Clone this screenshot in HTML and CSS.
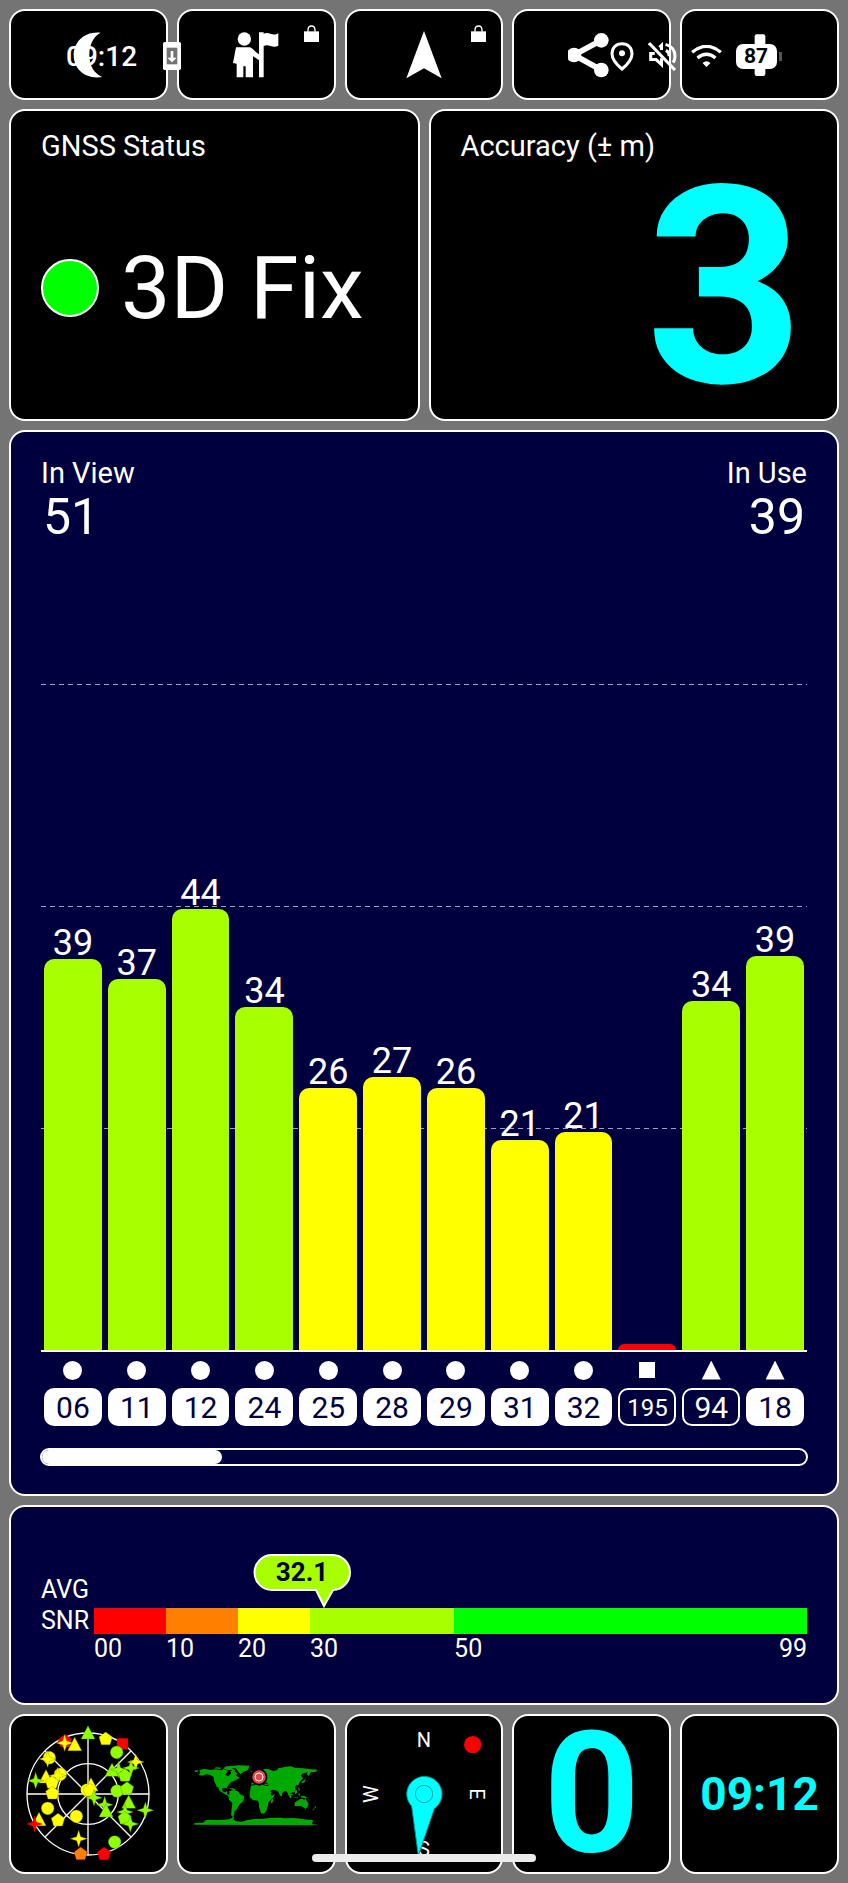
FILE: index.html
```html
<!DOCTYPE html>
<html lang="en">
<head>
    <meta charset="UTF-8">
    <meta name="viewport" content="width=device-width, initial-scale=1.0">
    <title>GNSS Status</title>
    <link rel="stylesheet" href="styles.css">
</head>
<body>
    <div class="status-bar">
        <span class="status-clock">09:12</span>
        <svg class="status-download" width="18" height="28" viewBox="0 0 54 84">
            <rect width="54" height="84" rx="5" fill="#fff"/>
            <rect x="11" y="17" width="32" height="50" fill="#747474"/>
            <path d="M23 27h8v20h10L27 61 13 47h10z" fill="#fff"/>
        </svg>
        <div class="status-icons">
            <svg width="24" height="29" viewBox="0 0 72 87">
                <path d="M36 5C18 5 6 18 6 35c0 20 18 36 30 46 12-10 30-26 30-46C66 18 54 5 36 5z" fill="none" stroke="#fff" stroke-width="9"/>
                <circle cx="36" cy="34" r="9" fill="#fff"/>
            </svg>
            <svg width="29" height="29" viewBox="0 0 86 86" fill="none" stroke="#fff" stroke-width="9">
                <path d="M3 3L80 83"/>
                <path d="M20 34H8v18h16l16 15V48M34 16l6-6v14" />
                <path d="M52 7c17 5 28 18 28 35 0 7-2 13-5 19M53 25c7 4 10 10 10 17"/>
            </svg>
            <svg width="31" height="22" viewBox="0 0 92 66" fill="none" stroke="#fff" stroke-width="10">
                <path d="M3 22Q46-14 89 22"/>
                <path d="M19 39Q46 17 73 39"/>
                <path d="M34 54q12-10 24 0L46 66z" fill="#fff" stroke="none"/>
            </svg>
            <span class="battery">87</span>
        </div>
    </div>

    <main class="dashboard">
        <nav class="toolbar">
            <button class="tile" aria-label="Night mode">
                <svg class="icon" viewBox="193 92 144 144">
                    <path d="M303 97C252 92 222 127 222 165c0 40 34 74 86 65-27-11-39-37-39-66 0-31 12-56 34-67z"/>
                </svg>
            </button>
            <button class="tile" aria-label="Tour guide">
                <svg class="icon" viewBox="697 92 144 144">
                    <circle cx="734" cy="116" r="20"/>
                    <path d="M709 141h42c8 3 14 12 27 21V96h14v4c16-8 26 10 44-1v37c-18 10-28-8-44 1v94h-14v-52c-8-4-13-8-18-12v64h-22v-33h-7v33h-20v-41l-11-2z"/>
                </svg>
                <svg class="lock" viewBox="0 0 45 51">
                    <path d="M0 19h45v32H0z"/>
                    <path d="M12 20v-5c0-16 21-16 21 0v5" fill="none" stroke="#fff" stroke-width="4"/>
                </svg>
            </button>
            <button class="tile" aria-label="Navigate">
                <svg class="icon" viewBox="1200 92 144 144">
                    <path d="M1272 92l-53 142 53-30 53 30z"/>
                </svg>
                <svg class="lock" viewBox="0 0 45 51">
                    <path d="M0 19h45v32H0z"/>
                    <path d="M12 20v-5c0-16 21-16 21 0v5" fill="none" stroke="#fff" stroke-width="4"/>
                </svg>
            </button>
            <button class="tile" aria-label="Share">
                <svg class="icon" viewBox="445 92 144 144">
                    <path d="M545 120l-82 44 82 45" fill="none" stroke="#fff" stroke-width="17"/>
                    <circle cx="545" cy="120" r="22"/>
                    <circle cx="463" cy="164" r="22"/>
                    <circle cx="545" cy="209" r="22"/>
                </svg>
            </button>
            <button class="tile" aria-label="Add">
                <svg class="icon" viewBox="947 92 144 144">
                    <rect x="1003" y="102" width="32" height="125" rx="6"/>
                    <rect x="962" y="148" width="106" height="32" rx="6"/>
                </svg>
            </button>
        </nav>

        <div class="summary">
            <section class="panel reading">
                <h2 class="label">GNSS Status</h2>
                <div class="fix">
                    <span class="fix-light"></span>
                    <span class="fix-text">3D Fix</span>
                </div>
            </section>
            <section class="panel reading">
                <h2 class="label">Accuracy (± m)</h2>
                <div class="accuracy">3</div>
            </section>
        </div>

        <section class="panel signal">
            <div class="counts">
                <div>
                    <h2 class="label">In View</h2>
                    <div class="count">51</div>
                </div>
                <div class="in-use">
                    <h2 class="label">In Use</h2>
                    <div class="count">39</div>
                </div>
            </div>
            <div class="plot">
                <div class="gridlines"><i></i><i></i><i></i></div>
                <div class="column"><span>39</span><div class="bar good" style="height: 58.7%"></div></div>
                <div class="column"><span>37</span><div class="bar good" style="height: 55.7%"></div></div>
                <div class="column"><span>44</span><div class="bar good" style="height: 66.2%"></div></div>
                <div class="column"><span>34</span><div class="bar good" style="height: 51.5%"></div></div>
                <div class="column"><span>26</span><div class="bar fair" style="height: 39.3%"></div></div>
                <div class="column"><span>27</span><div class="bar fair" style="height: 41%"></div></div>
                <div class="column"><span>26</span><div class="bar fair" style="height: 39.3%"></div></div>
                <div class="column"><span>21</span><div class="bar fair" style="height: 31.6%"></div></div>
                <div class="column"><span>21</span><div class="bar fair" style="height: 32.7%"></div></div>
                <div class="column"><div class="bar bad" style="height: 0.9%"></div></div>
                <div class="column"><span>34</span><div class="bar good" style="height: 52.4%"></div></div>
                <div class="column"><span>39</span><div class="bar good" style="height: 59.2%"></div></div>
            </div>
            <div class="satellites">
                <div class="satellite"><i class="shape circle"></i><span class="prn used">06</span></div>
                <div class="satellite"><i class="shape circle"></i><span class="prn used">11</span></div>
                <div class="satellite"><i class="shape circle"></i><span class="prn used">12</span></div>
                <div class="satellite"><i class="shape circle"></i><span class="prn used">24</span></div>
                <div class="satellite"><i class="shape circle"></i><span class="prn used">25</span></div>
                <div class="satellite"><i class="shape circle"></i><span class="prn used">28</span></div>
                <div class="satellite"><i class="shape circle"></i><span class="prn used">29</span></div>
                <div class="satellite"><i class="shape circle"></i><span class="prn used">31</span></div>
                <div class="satellite"><i class="shape circle"></i><span class="prn used">32</span></div>
                <div class="satellite"><i class="shape square"></i><span class="prn small">195</span></div>
                <div class="satellite"><i class="shape triangle"></i><span class="prn">94</span></div>
                <div class="satellite"><i class="shape triangle"></i><span class="prn used">18</span></div>
            </div>
            <div class="scroll-track"><div class="scroll-thumb" style="width: 23.6%"></div></div>
        </section>

        <section class="panel snr">
            <div class="snr-label">AVG<br>SNR</div>
            <div class="snr-scale">
                <div class="snr-bar">
                    <i class="bad"></i>
                    <i class="poor"></i>
                    <i class="fair"></i>
                    <i class="good"></i>
                    <i class="best"></i>
                    <div class="bubble" style="left: 32.4%">
                        <svg viewBox="0 0 98 54">
                            <path d="M19 1h60a17 17 0 0 1 1 35L71 52 63 36H19A17 17 0 0 1 19 1z" fill="#a8ff00" stroke="#fff" stroke-width="2"/>
                        </svg>
                        <span>32.1</span>
                    </div>
                </div>
                <div class="snr-ticks">
                    <span>00</span>
                    <span>10</span>
                    <span>20</span>
                    <span>30</span>
                    <span>50</span>
                    <span>99</span>
                </div>
            </div>
        </section>

        <nav class="gauges">
            <button class="tile" aria-label="Sky view">
                <svg class="gauge" viewBox="55 71 420 420">
                    <defs>
                        <path id="tri" d="M0-22L21 18H-21z"/>
                        <path id="pent" d="M0-20L20-5 13 18H-13L-20-5z"/>
                        <path id="star" d="M0-25L6-6 25 0 6 6 0 25-6 6-25 0-6-6z"/>
                        <circle id="dot" r="19"/>
                    </defs>
                    <g fill="none" stroke="#fff" stroke-width="4">
                        <circle cx="265" cy="281" r="183"/>
                        <circle cx="265" cy="281" r="91"/>
                        <path d="M265 98v366M82 281h366M136 152l258 258M394 152L136 410"/>
                    </g>
                    <g fill="#f00" stroke="#a00000" stroke-width="1">
                        <use href="#pent" x="196" y="122"/>
                        <path d="M352 114h33v33h-33z"/>
                        <use href="#pent" x="313" y="460"/>
                        <use href="#pent" x="243" y="460" fill="#ff8000"/>
                    </g>
                    <g fill="#ff0" stroke="#808000" stroke-width="1">
                        <use href="#star" x="195" y="128"/>
                        <use href="#tri" x="225" y="133"/>
                        <use href="#pent" x="318" y="115"/>
                        <use href="#dot" x="149" y="172"/>
                        <use href="#star" x="144" y="176"/>
                        <use href="#star" x="408" y="185"/>
                        <use href="#dot" x="182" y="222"/>
                        <use href="#tri" x="139" y="230"/>
                        <use href="#star" x="174" y="226"/>
                        <use href="#pent" x="157" y="246"/>
                        <use href="#pent" x="158" y="278"/>
                        <use href="#tri" x="274" y="254"/>
                        <use href="#dot" x="262" y="269"/>
                        <use href="#pent" x="271" y="269"/>
                        <use href="#dot" x="144" y="324"/>
                        <use href="#tri" x="118" y="358"/>
                        <use href="#pent" x="175" y="359"/>
                        <use href="#dot" x="230" y="348"/>
                        <use href="#star" x="237" y="415"/>
                    </g>
                    <use href="#star" x="105" y="371" fill="#f00"/>
                    <g fill="#90ff00" stroke="#408000" stroke-width="1">
                        <use href="#tri" x="265" y="98"/>
                        <use href="#dot" x="351" y="156"/>
                        <use href="#star" x="108" y="241"/>
                        <use href="#star" x="394" y="203"/>
                        <use href="#tri" x="337" y="210"/>
                        <use href="#star" x="357" y="208"/>
                        <use href="#pent" x="376" y="225"/>
                        <use href="#dot" x="352" y="272"/>
                        <use href="#pent" x="382" y="264"/>
                        <use href="#star" x="283" y="292"/>
                        <use href="#tri" x="387" y="306"/>
                        <use href="#star" x="315" y="313"/>
                        <use href="#tri" x="319" y="332"/>
                        <use href="#star" x="437" y="330"/>
                        <use href="#star" x="376" y="335"/>
                        <use href="#pent" x="375" y="353"/>
                        <use href="#star" x="392" y="371"/>
                        <use href="#dot" x="345" y="425"/>
                    </g>
                </svg>
            </button>
            <button class="tile" aria-label="Map">
                <svg class="gauge" viewBox="49 71 420 420">
                    <g fill="#00a800">
                        <path d="M74 211l10-2 2 4-8 3zM89 209l14-3 20 3 14-2 18 3 6-4 14 6-8 12 10 4 8-10-4-6 9-2 12 8-2 8 10 6-12 8-12 4-8 8-6 8 2 6-6-4-10 2 0 8 8 4 6-4 0 8 6 4 6 4-6 0-14-8-14-8-4-10-4-2-8-16-2-14-10-6-12-2-12 4-12-2 6-6z"/>
                        <path d="M132 204l8-3 16 1-6 4zM160 204l10-6 24-2 6 4-14 4 12 6-4 4-12-6-10 2zM176 198l30-3 34 1-6 14-12 4-10 8-8-10-6-8-18-2z"/>
                        <path d="M176 263l14 1 10 4-8 2zM179 272l14-3 14 5 4 8 13 6-4 16-10 8-8 14-8 8 0 8-4 8-6-6 2-20 2-16-10-10-2-10 3-8z"/>
                        <path d="M244 255l2-8 8-1 4-6 8-4 6-4 0-6-6 0 8-14 10-6 12 0 14 6 12-2 4-6 20-4 16-2 14 4 22 2 20 2 24 2-2 6-16 2-8 12-4-6 2-6-16 4-4 6 6 8-10 12-4 8-6 0-4 6 2 8-6 8-10 2 4 12-4 4-6-10-4-10-6-2-8 6-2 10-5-2-5-12-8-4-10-2-6 4 4 6-4 2 4 6 10-4-4 8-8 8-8 8-2 14-4 12-8 8-8-1-6-20 0-10-4-8-14-2-10-8 0-10z"/>
                        <path d="M305 298l4-3 2 6-4 8-4-2zM360 262l4 8-4 2zM361 275l10 10-6-1zM373 272l8-3 2 8-6 4zM385 282l6-3-1 8zM392 286l12 1 10 6-8 1-12-3zM370 290l16 2-6 2zM385 260l4 4 2 8-4-2zM394 245l10-5 4-8-2 12-8 5zM253 225l8 2-1 7-7 0zM240 212l8-1-3 4zM355 201l10 2-5 2z"/>
                        <path d="M376 306l10-6 6-5 7 0 4 5 4-6 4 8 6 8-4 12-8 2-6-4-8-4-12 2-5-2zM405 324l5 0-3 4zM436 317l4 3-6 6zM431 325l3 1-5 5z"/>
                        <path d="M74 373v-5l24-1 8-3-4-3 16-3 26 1 20-1 14-1 8-4 6-5 2 3-4 6 8 5 18 2 18-5 20-3 24 0 14-2 22-2 20 0 10 2 26-1 24 2 20 3 18 2-4 6 0 6 16 1v2z"/>
                    </g>
                    <path d="M243 254l8 0 8-4 10 5 10-4 8 4 10 0M280 250l10-2 4 2" fill="none" stroke="#000" stroke-width="3"/>
                    <circle cx="268" cy="230" r="25" fill="#000"/>
                    <circle cx="268" cy="230" r="20" fill="#e54848"/>
                    <circle cx="268" cy="230" r="12" fill="none" stroke="#fff" stroke-width="3"/>
                </svg>
            </button>
            <button class="tile" aria-label="Compass">
                <svg class="gauge compass" viewBox="72 71 420 420">
                    <text x="282" y="140">N</text>
                    <text x="282" y="466">S</text>
                    <text transform="translate(420 281) rotate(90)">E</text>
                    <text transform="translate(145 281) rotate(-90)">W</text>
                    <circle cx="428" cy="133" r="26" fill="#f00"/>
                    <path d="M245 318A53 53 0 1 1 313 325L265 466z" fill="#0ff" stroke="#009090" stroke-width="3"/>
                    <circle cx="282" cy="281" r="26" fill="none" stroke="#00a0a0" stroke-width="3"/>
                </svg>
            </button>
            <button class="tile speed">0</button>
            <button class="tile clock">09:12</button>
        </nav>
    </main>
    <div class="home-indicator"></div>
</body>
</html>
```
FILE: styles.css
```css
* {
    box-sizing: border-box;
}
body {
    position: relative;
    margin: 0;
    background-color: #747474;
    color: white;
    font-family: Roboto, "Liberation Sans", sans-serif;
}
svg {
    display: block;
}
.dashboard {
    display: flex;
    flex-direction: column;
    gap: 9px;
    min-height: 100vh;
    padding: 9px;
}
.toolbar,
.gauges {
    display: grid;
    grid-template-columns: repeat(5, 1fr);
    gap: 9px;
}
.toolbar {
    grid-auto-rows: 91px;
}
.gauges {
    grid-auto-rows: 160px;
}
.tile,
.panel {
    border: 2px solid white;
    border-radius: 16px;
    background-color: black;
    color: white;
}
.tile {
    position: relative;
    display: flex;
    align-items: center;
    justify-content: center;
    min-width: 0;
    padding: 0;
    font-family: inherit;
    cursor: pointer;
}
.icon {
    width: 48px;
    height: 48px;
    fill: white;
}
.lock {
    position: absolute;
    top: 14px;
    right: 15px;
    width: 15px;
    height: 17px;
    fill: white;
}

/* system status bar drawn over the toolbar */
.status-bar {
    position: absolute;
    top: 36px;
    left: 0;
    right: 0;
    z-index: 2;
    display: flex;
    align-items: center;
    height: 40px;
    padding: 0 66px;
    pointer-events: none;
}
.status-clock {
    font-size: 28px;
    font-weight: 500;
}
.status-download {
    margin-left: 26px;
}
.status-icons {
    display: flex;
    align-items: center;
    gap: 14px;
    margin-left: auto;
}
.battery {
    position: relative;
    width: 41px;
    height: 25px;
    margin-right: 5px;
    padding-left: 8px;
    border-radius: 7px;
    background-color: white;
    color: black;
    font-size: 21px;
    font-weight: 700;
    line-height: 25px;
}
.battery::after {
    content: "";
    position: absolute;
    top: 8px;
    right: -5px;
    width: 3px;
    height: 9px;
    background-color: #555;
}

.summary {
    display: grid;
    grid-template-columns: 1fr 1fr;
    gap: 9px;
}
.label {
    margin: 0;
    font-size: 29px;
    font-weight: 400;
    line-height: 34px;
}
.reading {
    display: flex;
    flex-direction: column;
    height: 312px;
    padding: 18px 30px 6px;
}
.fix,
.accuracy {
    display: flex;
    flex: 1;
    align-items: center;
}
.fix {
    gap: 22px;
}
.fix-light {
    width: 58px;
    height: 58px;
    border: 2px solid white;
    border-radius: 50%;
    background-color: #0f0;
}
.fix-text {
    font-size: 88px;
    line-height: 102px;
}
.accuracy {
    justify-content: flex-end;
    padding-right: 3px;
    color: #0ff;
    font-size: 276px;
    font-weight: 700;
    line-height: 240px;
}

.signal {
    display: flex;
    flex: 1;
    flex-direction: column;
    padding: 24px 30px 28px;
    background-color: #00003f;
}
.counts {
    display: flex;
    justify-content: space-between;
    margin-bottom: 140px;
}
.in-use {
    text-align: right;
}
.count {
    padding: 0 2px;
    font-size: 50px;
    line-height: 54px;
}
.plot,
.satellites {
    display: grid;
    grid-template-columns: repeat(12, 1fr);
}
.plot {
    position: relative;
    flex: 1;
    min-height: 320px;
    border-bottom: 2px solid white;
}
.gridlines {
    position: absolute;
    inset: 0;
    display: grid;
    grid-template-rows: repeat(3, 1fr);
}
.gridlines i {
    height: 1px;
    background: repeating-linear-gradient(90deg, #a0a0c4 0 5px, transparent 5px 9px);
}
.column {
    position: relative;
    display: flex;
    flex-direction: column;
    justify-content: flex-end;
    padding: 0 3px;
    text-align: center;
}
.column span {
    font-size: 36px;
    line-height: 32px;
}
.bar {
    border-radius: 10px 10px 0 0;
}
.good {
    background-color: #a8ff00;
}
.fair {
    background-color: #ff0;
}
.poor {
    background-color: #ff8000;
}
.bad {
    background-color: #f00;
}
.best {
    background-color: #0f0;
}
.satellite {
    display: grid;
    grid-template-rows: 36px 38px;
    align-items: center;
    padding: 0 3px;
}
.shape {
    justify-self: center;
    width: 19px;
    height: 19px;
    background-color: white;
}
.circle {
    border-radius: 50%;
}
.square {
    width: 16px;
    height: 16px;
}
.triangle {
    clip-path: polygon(50% 0, 100% 100%, 0 100%);
}
.prn {
    height: 38px;
    border: 2px solid white;
    border-radius: 10px;
    font-size: 30px;
    line-height: 36px;
    text-align: center;
}
.prn.used {
    background-color: white;
    color: #00003f;
}
.prn.small {
    font-size: 24px;
}
.scroll-track {
    height: 18px;
    margin: 22px -1px 0;
    border: 2px solid white;
    border-radius: 9px;
}
.scroll-thumb {
    height: 14px;
    border-radius: 7px;
    background-color: white;
}

.snr {
    display: flex;
    height: 200px;
    padding: 67px 30px 0;
    background-color: #00003f;
    font-size: 25px;
}
.snr-label {
    width: 53px;
    line-height: 31px;
}
.snr-scale {
    flex: 1;
    padding-top: 34px;
}
.snr-bar,
.snr-ticks {
    display: grid;
    grid-template-columns: 10fr 10fr 10fr 20fr 24fr 25fr;
}
.snr-bar {
    position: relative;
    height: 26px;
}
.best {
    grid-column: span 2;
}
.snr-ticks {
    line-height: 30px;
}
.snr-ticks span:last-child {
    text-align: right;
}
.bubble {
    position: absolute;
    bottom: 100%;
    width: 98px;
    height: 54px;
    margin-left: -72px;
    color: #00003f;
    font-size: 26px;
    font-weight: 700;
    line-height: 36px;
    text-align: center;
}
.bubble span {
    position: absolute;
    inset: 0;
}

.gauge {
    width: 140px;
    height: 140px;
}
.compass text {
    fill: white;
    font-size: 60px;
    text-anchor: middle;
}
.speed {
    color: #0ff;
    font-size: 168px;
    font-weight: 700;
    line-height: 156px;
}
.clock {
    color: #0ff;
    font-size: 46px;
    font-weight: 700;
}
.home-indicator {
    position: absolute;
    bottom: 21px;
    left: 50%;
    width: 224px;
    height: 8px;
    border-radius: 4px;
    background-color: #ececec;
    transform: translateX(-50%);
}
```
